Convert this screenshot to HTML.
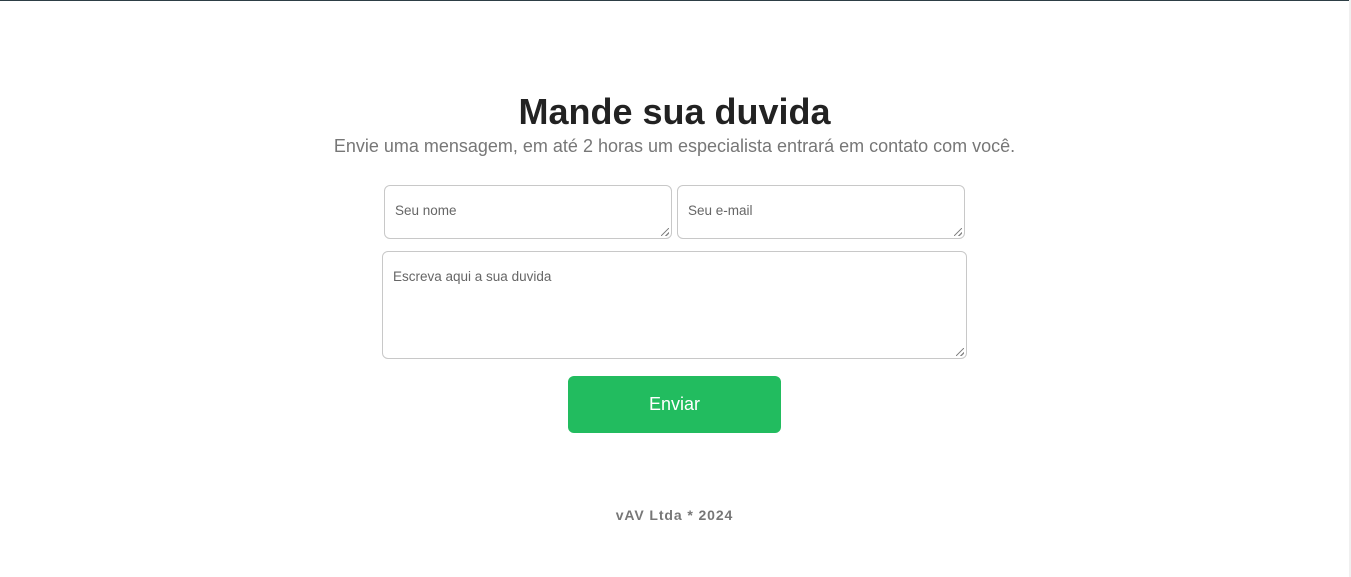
<!DOCTYPE html>
<html><head><style>
html,body{margin:0;padding:0;background:#fff;width:1351px;height:577px;overflow:hidden;font-family:"Liberation Sans",Arial,sans-serif}
.top{position:absolute;left:0;top:0;width:1349px;height:1px;background:#2d3e45}
.sb{position:absolute;right:0;top:0;width:2px;height:577px;background:#f0f0f0}
h1{position:absolute;top:91px;left:0;width:1349px;margin:0;text-align:center;font-size:36px;font-weight:bold;color:#222}
.sub{position:absolute;top:136px;left:0;width:1349px;text-align:center;font-size:18px;color:#777}
.box{position:absolute;border:1px solid #c8c8c8;border-radius:6px;box-sizing:border-box;font-size:13.5px;color:#666}
.box span{position:absolute;left:10px}
.grip{position:absolute;right:2px;bottom:2px;width:8px;height:8px;background:linear-gradient(135deg,transparent 45%,#888 45%,#888 55%,transparent 55%,transparent 75%,#888 75%,#888 85%,transparent 85%)}
.btn{position:absolute;left:568px;top:376px;width:213px;height:57px;background:#22bc5f;border-radius:6px;color:#fff;font-size:18px;text-align:center;line-height:57px}
.foot{position:absolute;top:507px;left:0;width:1349px;text-align:center;font-size:14px;font-weight:bold;color:#777;letter-spacing:0.9px}
</style></head><body>
<div class="top"></div><div class="sb"></div>
<h1>Mande sua duvida</h1>
<div class="sub">Envie uma mensagem, em até 2 horas um especialista entrará em contato com você.</div>
<div class="box" style="left:384px;top:185px;width:288px;height:54px"><span style="top:17px">Seu nome</span><div class="grip"></div></div>
<div class="box" style="left:677px;top:185px;width:288px;height:54px"><span style="top:17px">Seu e-mail</span><div class="grip"></div></div>
<div class="box" style="left:382px;top:251px;width:585px;height:108px"><span style="top:17px">Escreva aqui a sua duvida</span><div class="grip"></div></div>
<div class="btn">Enviar</div>
<div class="foot">vAV Ltda * 2024</div>
</body></html>
